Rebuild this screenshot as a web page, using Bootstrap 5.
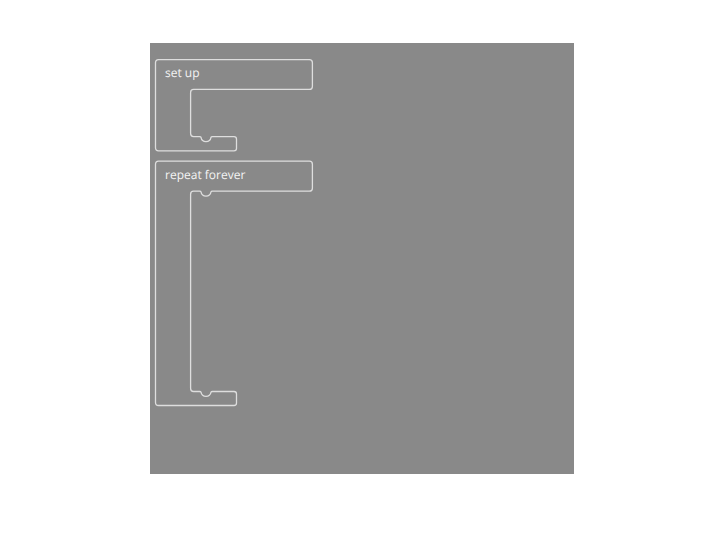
<!DOCTYPE html>
<html lang="en">
<head>
<meta charset="utf-8">
<meta name="viewport" content="width=device-width, initial-scale=1">
<title>Block workspace</title>
<link href="https://cdn.jsdelivr.net/npm/bootstrap@5.3.0/dist/css/bootstrap.min.css" rel="stylesheet">
<style>
  body { background: #fff; font-family: "Open Sans", "Noto Sans", sans-serif; }
  .page { padding: 43px 146px 66px 150px; }
  .workspace { background: #898989; padding: 16px 5px; gap: 9px; }
  .block { display: grid; justify-items: start; align-items: start; }
  .block > * { grid-area: 1 / 1; }
  .block-shape { display: block; fill: none; stroke: #dedede; stroke-width: 1.3; overflow: visible; }
  .block-title { color: #f4f4f4; font-size: 12px; font-weight: 400; line-height: 16px; padding: 6px 10px; text-rendering: geometricPrecision; }
</style>
</head>
<body>
<main class="page d-flex min-vh-100">
  <div class="workspace d-flex flex-column align-items-start flex-grow-1">
    <section class="block" aria-labelledby="setup-title">
      <svg class="block-shape" width="158" height="93" viewBox="0 0 158 93" aria-hidden="true">
        <path d="M3.5 .7H154.4Q157.4 .7 157.4 3.7V27.4Q157.4 30.4 154.4 30.4H38.6Q35.6 30.4 35.6 33.4V74.6Q35.6 77.6 38.6 77.6H44.5Q45.8 77.6 46 78.3C47 84 55 84 56 78.3Q56.2 77.6 57.5 77.6H79Q81.5 77.6 81.5 80V89.5Q81.5 91.8 79 91.8H3.5Q.5 91.8 .5 88.8V3.7Q.5 .7 3.5 .7Z"/>
      </svg>
      <h2 class="block-title m-0" id="setup-title">set up</h2>
    </section>
    <section class="block" aria-labelledby="loop-title">
      <svg class="block-shape" width="158" height="246" viewBox="0 0 158 246" aria-hidden="true">
        <path d="M3.5 .2H154.4Q157.4 .2 157.4 3.2V27.2Q157.4 30.2 154.4 30.2H57.5Q56.2 30.2 56 30.9C55 36.6 47 36.6 46 30.9Q45.8 30.2 44.5 30.2H38.6Q35.6 30.2 35.6 33.2V227.5Q35.6 230.5 38.6 230.5H44.5Q45.8 230.5 46 231.2C47 236.9 55 236.9 56 231.2Q56.2 230.5 57.5 230.5H79Q81.5 230.5 81.5 233V242Q81.5 244.5 79 244.5H3.5Q.5 244.5 .5 241.5V3.2Q.5 .2 3.5 .2Z"/>
      </svg>
      <h2 class="block-title m-0" id="loop-title">repeat forever</h2>
    </section>
  </div>
</main>
<script src="https://cdn.jsdelivr.net/npm/bootstrap@5.3.0/dist/js/bootstrap.bundle.min.js"></script>
</body>
</html>
